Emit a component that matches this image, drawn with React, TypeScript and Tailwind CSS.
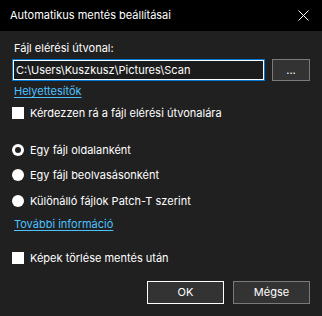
import { ReactNode } from 'react';

const Check = ({ label, className }: { label: string; className?: string }) => (
  <div className={`flex items-center h-4 ${className ?? ''}`}>
    <div className="w-[12px] h-[12px] bg-white shrink-0" />
    <span className="ml-[6px] text-[11px] text-white leading-4">{label}</span>
  </div>
);

const Radio = ({ label, selected, className }: { label: string; selected?: boolean; className?: string }) => (
  <div className={`flex items-center h-4 ${className ?? ''}`}>
    <div className="w-[12px] h-[12px] rounded-full bg-white shrink-0 flex items-center justify-center">
      {selected && <div className="w-[6px] h-[6px] rounded-full bg-[#202020]" />}
    </div>
    <span className="ml-[6px] text-[11px] text-white leading-4">{label}</span>
  </div>
);

const Btn = ({ children, primary }: { children: ReactNode; primary?: boolean }) => (
  <button
    className={`w-[77px] h-[23px] bg-[#333333] text-white text-[11px] border ${
      primary ? 'border-white' : 'border-[#7a7a7a]'
    }`}
  >
    {children}
  </button>
);

export default function App() {
  return (
    <div className="w-[322px] h-[316px] bg-[#202020] flex flex-col font-['Inter',sans-serif]">
      <div className="h-[31px] bg-black flex items-center justify-between pl-[10px] pr-[12px] shrink-0">
        <span className="text-white text-[11px]">Automatikus mentés beállításai</span>
        <svg width="11" height="11" viewBox="0 0 11 11" className="mr-[1px]">
          <path d="M0.5 0.5 L10.5 10.5 M10.5 0.5 L0.5 10.5" stroke="white" strokeWidth="1" />
        </svg>
      </div>
      <div className="flex flex-col px-[12px] pt-[9px]">
        <span className="text-white text-[11px] leading-4 ml-[2px]">Fájl elérési útvonal:</span>
        <div className="flex mt-[3px] gap-[7px]">
          <div className="w-[253px] h-[22px] border border-[#0078d7] shadow-[inset_0_0_0_1px_#ffffff] bg-[#1c1c1c] flex items-center px-[3px]">
            <span className="text-white text-[11px]">C:\Users\Kuszkusz\Pictures\Scan</span>
          </div>
          <button className="w-[38px] h-[22px] bg-[#333333] border border-[#7a7a7a] text-white text-[11px] leading-none">
            ...
          </button>
        </div>
        <a className="mt-[2px] text-[11px] leading-4 text-[#4cc2ff] underline underline-offset-2 ml-[2px] self-start">
          Helyettesítők
        </a>
        <Check label="Kérdezzen rá a fájl elérési útvonalára" className="mt-[6px]" />
        <Radio label="Egy fájl oldalanként" selected className="mt-[21px]" />
        <Radio label="Egy fájl beolvasásonként" className="mt-[9px]" />
        <Radio label="Különálló fájlok Patch-T szerint" className="mt-[10px]" />
        <a className="mt-[7px] text-[11px] leading-4 text-[#4cc2ff] underline underline-offset-2 ml-[2px] self-start">
          További információ
        </a>
        <Check label="Képek törlése mentés után" className="mt-[18px]" />
        <div className="flex justify-end gap-[9px] mt-[15px]">
          <Btn primary>OK</Btn>
          <Btn>Mégse</Btn>
        </div>
      </div>
    </div>
  );
}
